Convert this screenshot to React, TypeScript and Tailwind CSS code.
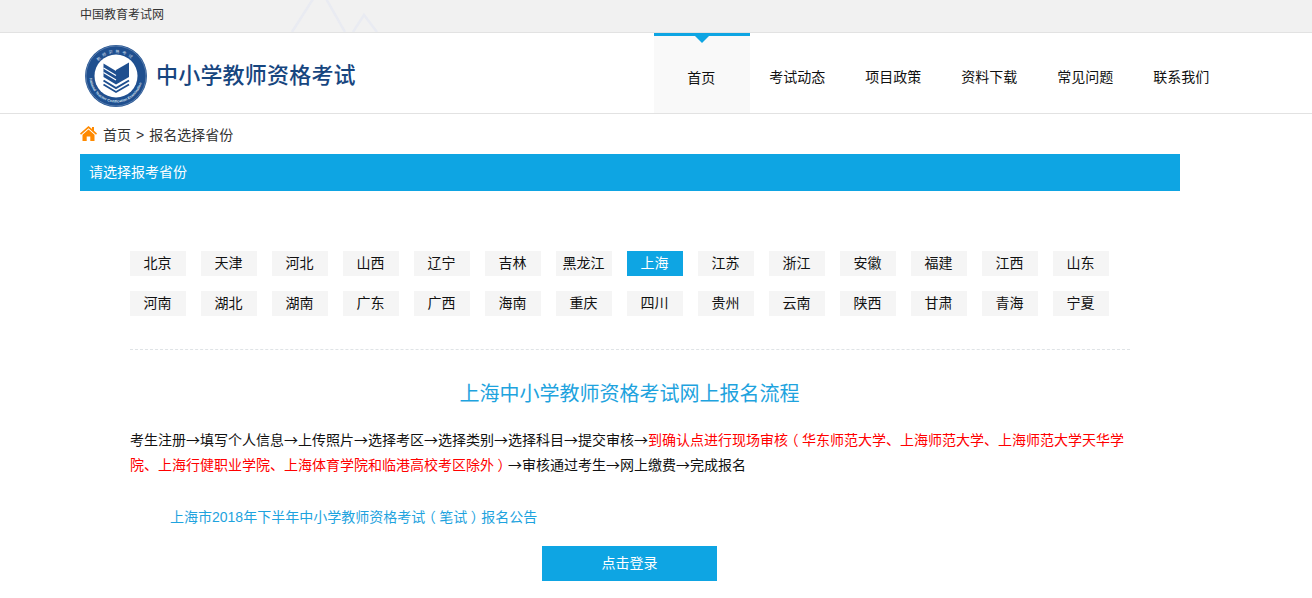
const font = { fontFamily: '"Liberation Sans", "Noto Sans CJK SC", sans-serif' };

const navItems = ['首页', '考试动态', '项目政策', '资料下载', '常见问题', '联系我们'];

const provinces = [
  '北京', '天津', '河北', '山西', '辽宁', '吉林', '黑龙江', '上海', '江苏', '浙江', '安徽', '福建', '江西', '山东',
  '河南', '湖北', '湖南', '广东', '广西', '海南', '重庆', '四川', '贵州', '云南', '陕西', '甘肃', '青海', '宁夏',
];

// full width bracket, glyph centred in its 14px box like the original page
const Paren = ({ children }: { children: string }) => (
  <span className="inline-block w-[14px] text-center [font-feature-settings:'halt']">{children}</span>
);

const Logo = () => (
  <svg width="64" height="64" viewBox="0 0 64 64" className="shrink-0">
    <defs>
      <path id="ring-top" d="M9 32a23 23 0 0 1 46 0" />
      <path id="ring-bottom" d="M5.500 32a26.500 26.500 0 0 0 53 0" />
    </defs>
    <circle cx="32" cy="32" r="31" fill="#1f4f8f" />
    <circle cx="32" cy="32" r="30" fill="none" stroke="#8fa8c8" strokeWidth="0.5" />
    <circle cx="32" cy="32" r="21.500" fill="#fff" />
    <text fontSize="4" fill="#cfdcec" letterSpacing="2.500" style={{ fontFamily: '"Noto Sans CJK SC", sans-serif' }}>
      <textPath href="#ring-top" startOffset="22%">教师资格考试</textPath>
    </text>
    <text fontSize="3.600" fill="#dfe7f2" fontWeight="700" style={{ fontFamily: '"Liberation Sans", sans-serif' }}>
      <textPath href="#ring-bottom" startOffset="3%">National Teacher Certification Examination</textPath>
    </text>
    {/* book: solid right page, chevron stripes on the left and bottom */}
    <path d="M45 18.500V33l-13 7.500V26z" fill="#1f4f8f" />
    <path d="M19.500 19.500L32 27v13.500l-12.500-7.500z" fill="#1f4f8f" />
    <path d="M19.500 24l12.500 7.500M19.500 28.500L32 36" stroke="#fff" strokeWidth="1.200" fill="none" />
    <path d="M19.500 36.500L32 44l13-7.500" stroke="#1f4f8f" strokeWidth="2" fill="none" />
    <path d="M19.500 40.500L32 48l13-7.500" stroke="#1f4f8f" strokeWidth="1.800" fill="none" />
  </svg>
);

const App = () => {
  return (
    <div className="min-h-[598px] bg-white text-[14px] text-[#111]" style={font}>
      {/* Top bar */}
      <div className="relative h-[33px] overflow-hidden border-b border-[#e2e2e2] bg-[#f1f1f1]">
        <svg className="absolute left-[285px] top-0" width="100" height="32" viewBox="0 0 100 32" fill="none" stroke="#e9ebf2" strokeWidth="2.500">
          <path d="M7 32L35 -12L60 32" />
          <path d="M68 32L79 15L92 32" />
        </svg>
        <div className="relative ml-[80px] pt-[7px] text-[12px] leading-[16px] text-[#333]">中国教育考试网</div>
      </div>

      {/* Header */}
      <div className="flex h-[81px] items-start border-b border-[#e2e2e2]">
        <div className="ml-[84px] flex h-[80px] items-center gap-[8px] pt-[5px]">
          <Logo />
          <span className="text-[22px] font-medium tracking-[0.2px] text-[#17467f]">中小学教师资格考试</span>
        </div>
        <nav className="ml-[298px] flex h-[80px]">
          {navItems.map((item, i) => (
            <div
              key={item}
              className={`relative flex w-[96px] items-center justify-center pt-[8px] pr-[1px] ${i === 0 ? 'border-t-[3px] border-[#0ea5e3] bg-[#f9f9f9]' : ''}`}
            >
              {item}
              {i === 0 && (
                <span className="absolute left-[41px] top-0 h-0 w-0 border-x-[7px] border-t-[7px] border-x-transparent border-t-[#0ea5e3]" />
              )}
            </div>
          ))}
        </nav>
      </div>

      {/* Main */}
      <div className="ml-[80px] w-[1100px]">
        <div className="flex h-[40px] items-center pt-[3px] text-[#333]">
          <svg width="17" height="15" viewBox="0 0 17 15" className="mr-[6px] -translate-y-[2px]">
            <path d="M8.500 0L0 7.500l1 1.200L8.500 2.200 16 8.700l1-1.200-3-2.700V1h-2v2.100z" fill="#ff8a00" />
            <path d="M8.500 3.500L2.500 8.700V15h4.200v-4.500h3.600V15h4.200V8.700z" fill="#ff8a00" />
          </svg>
          <span>首页</span>
          <span className="mx-[5px]">&gt;</span>
          <span>报名选择省份</span>
        </div>

        <div className="flex h-[37px] items-center bg-[#0ea5e3] pl-[9px] text-white">请选择报考省份</div>

        <div className="px-[50px] pt-[60px]">
          <div className="grid grid-cols-[repeat(14,56px)] gap-x-[15px] gap-y-[15px]">
            {provinces.map((name) => (
              <div
                key={name}
                className={`flex h-[25px] items-center justify-center pr-[1px] ${name === '上海' ? 'bg-[#0ea5e3] text-white' : 'bg-[#f5f5f5]'}`}
              >
                {name}
              </div>
            ))}
          </div>

          <div className="mt-[33px] border-t border-dashed border-[#dfe3e6]" />

          <h2 className="mt-[30px] pr-[1px] text-center text-[20px] leading-[28px] text-[#1ea3de]">上海中小学教师资格考试网上报名流程</h2>

          <p className="mt-[19px] leading-[25px] [font-family:'Noto_Sans_CJK_SC','Liberation_Sans',sans-serif]">
            考生注册→填写个人信息→上传照片→选择考区→选择类别→选择科目→提交审核→
            <span className="text-[#ff0000]">
              到确认点进行现场审核<Paren>（</Paren>华东师范大学、上海师范大学、上海师范大学天华学院、上海行健职业学院、上海体育学院和临港高校考区除外<Paren>）</Paren>
            </span>
            →审核通过考生→网上缴费→完成报名
          </p>

          <div className="mt-[28px] pl-[40px] leading-[25px] text-[#1ea3de]">
            上海市2018年下半年中小学教师资格考试<Paren>（</Paren>笔试<Paren>）</Paren>报名公告
          </div>

          <div className="mt-[16px] flex justify-center">
            <button className="ml-[-1px] h-[35px] w-[175px] bg-[#0ea5e3] text-white">点击登录</button>
          </div>
        </div>
      </div>
    </div>
  );
};

export default App;
